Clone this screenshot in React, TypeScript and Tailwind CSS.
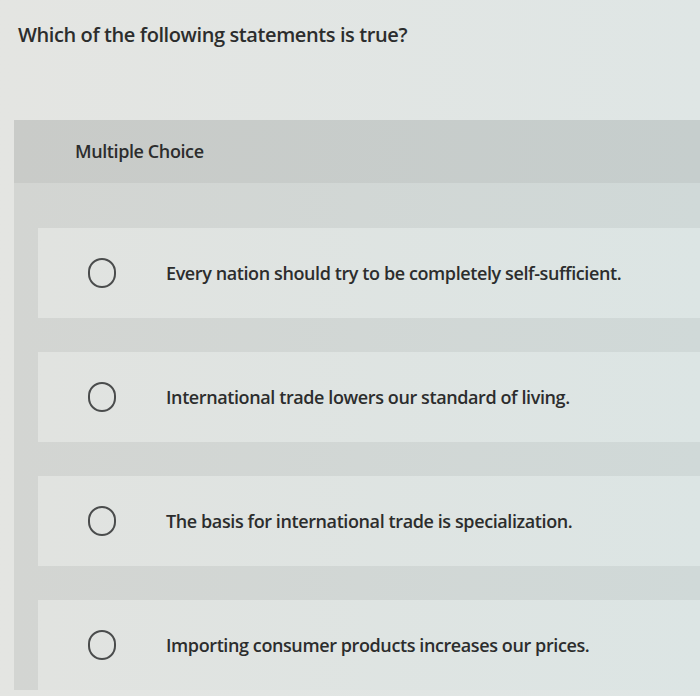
const options = [
  "Every nation should try to be completely self-sufficient.",
  "International trade lowers our standard of living.",
  "The basis for international trade is specialization.",
  "Importing consumer products increases our prices.",
];

function Radio() {
  return (
    <span className="block h-[30px] w-[28px] shrink-0 rounded-full border-2 border-[#4a4c4c]" />
  );
}

export default function App() {
  return (
    <div
      className="h-[696px] w-[700px] overflow-hidden bg-gradient-to-r from-[#e4e5e2] to-[#dfe6e5] text-[#2c2d2d]"
      style={{ fontFamily: "'Open Sans', Lato, sans-serif" }}
    >
      <h1 className="pl-[18px] pt-[20px] text-[20px] font-semibold leading-[30px] tracking-[-0.4px]">
        Which of the following statements is true?
      </h1>
      <div className="ml-[14px] mt-[70px] bg-gradient-to-r from-[#d3d5d2] to-[#d0d9d8]">
        <div className="flex h-[63px] items-center bg-gradient-to-r from-[#c9cbc8] to-[#c6cecd] pl-[61px] text-[18px] font-semibold tracking-[-0.4px]">
          Multiple Choice
        </div>
        <div className="flex flex-col gap-[34px] pl-[24px] pt-[45px]">
          {options.map((text) => (
            <div
              key={text}
              className="flex h-[90px] items-center bg-gradient-to-r from-[#e1e3e0] to-[#dce5e4] pl-[50px]"
            >
              <Radio />
              <span className="pl-[50px] text-[18px] font-semibold tracking-[-0.4px]">
                {text}
              </span>
            </div>
          ))}
        </div>
      </div>
    </div>
  );
}
